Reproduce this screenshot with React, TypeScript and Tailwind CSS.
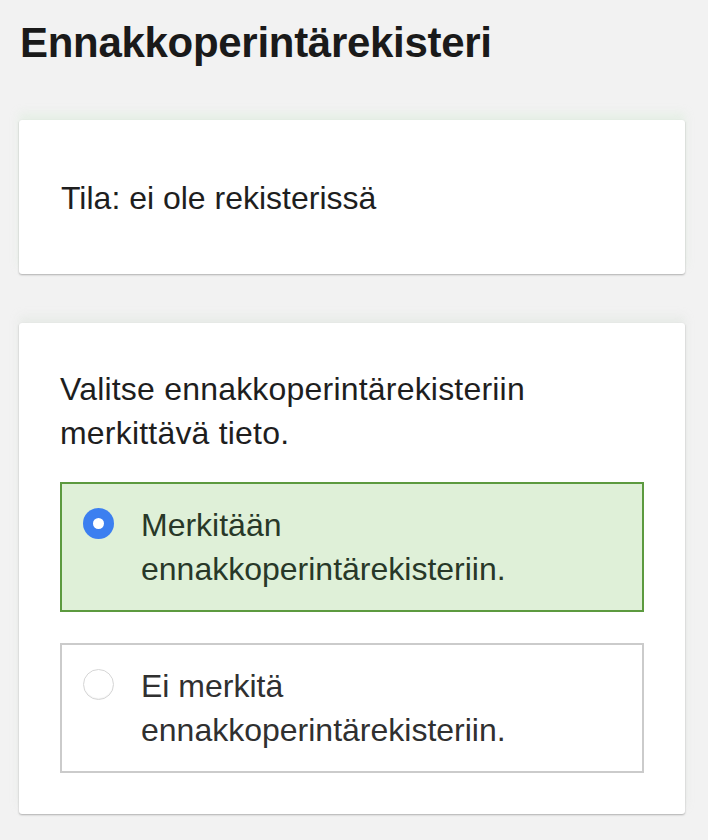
import React from "react";

function Radio({ checked }: { checked: boolean }) {
  if (checked) {
    return (
      <span className="mt-[5px] flex h-[31px] w-[31px] shrink-0 items-center justify-center rounded-full bg-[#3c7ff0]">
        <span className="h-[11px] w-[11px] rounded-full bg-white" />
      </span>
    );
  }
  return (
    <span className="mt-[5px] block h-[31px] w-[31px] shrink-0 rounded-full border border-[#d6d6d6] bg-white shadow-[inset_0_-1px_1px_rgba(0,0,0,0.05)]" />
  );
}

function Option({ checked, first, second }: { checked: boolean; first: string; second: string }) {
  return (
    <label
      className={
        checked
          ? "flex gap-[27px] border-2 border-[#5c9a3f] bg-[#dff0d8] py-[19px] pl-[21px] pr-[20px] text-[#283828]"
          : "flex gap-[27px] border-2 border-[#cbcbcb] bg-white py-[19px] pl-[21px] pr-[20px] text-[#303030]"
      }
    >
      <Radio checked={checked} />
      <span className="text-[32px] leading-[44px]">
        {first}
        <br />
        {second}
      </span>
    </label>
  );
}

export default function App() {
  return (
    <div
      className="min-h-[840px] bg-[#f2f2f2] pt-[18px] pb-[26px]"
      style={{ fontFamily: '"Liberation Sans", Arial, sans-serif' }}
    >
      <div className="ml-[19px] w-[666px]">
        <h1 className="pl-[1px] text-[42px] font-bold leading-[50px] tracking-[-0.3px] text-[#1a1a1a]">
          Ennakkoperintärekisteri
        </h1>
        <div className="mt-[52px] rounded-[3px] bg-white pt-[56px] pb-[54px] pl-[42px] text-[32px] leading-[44px] text-[#1e1e1e] shadow-[0_1px_2px_rgba(0,0,0,0.28),0_-7px_8px_rgba(225,238,225,0.7)]">
          Tila: ei ole rekisterissä
        </div>
        <div className="mt-[49px] rounded-[3px] bg-white pt-[44px] pb-[41px] px-[41px] shadow-[0_1px_2px_rgba(0,0,0,0.28),0_-7px_8px_rgba(228,232,228,0.7)]">
          <p className="text-[32px] leading-[44px] tracking-[0.2px] text-[#1e1e1e]">
            Valitse ennakkoperintärekisteriin
            <br />
            merkittävä tieto.
          </p>
          <div className="mt-[27px] flex flex-col gap-[31px]">
            <Option checked first="Merkitään" second="ennakkoperintärekisteriin." />
            <Option checked={false} first="Ei merkitä" second="ennakkoperintärekisteriin." />
          </div>
        </div>
      </div>
    </div>
  );
}
